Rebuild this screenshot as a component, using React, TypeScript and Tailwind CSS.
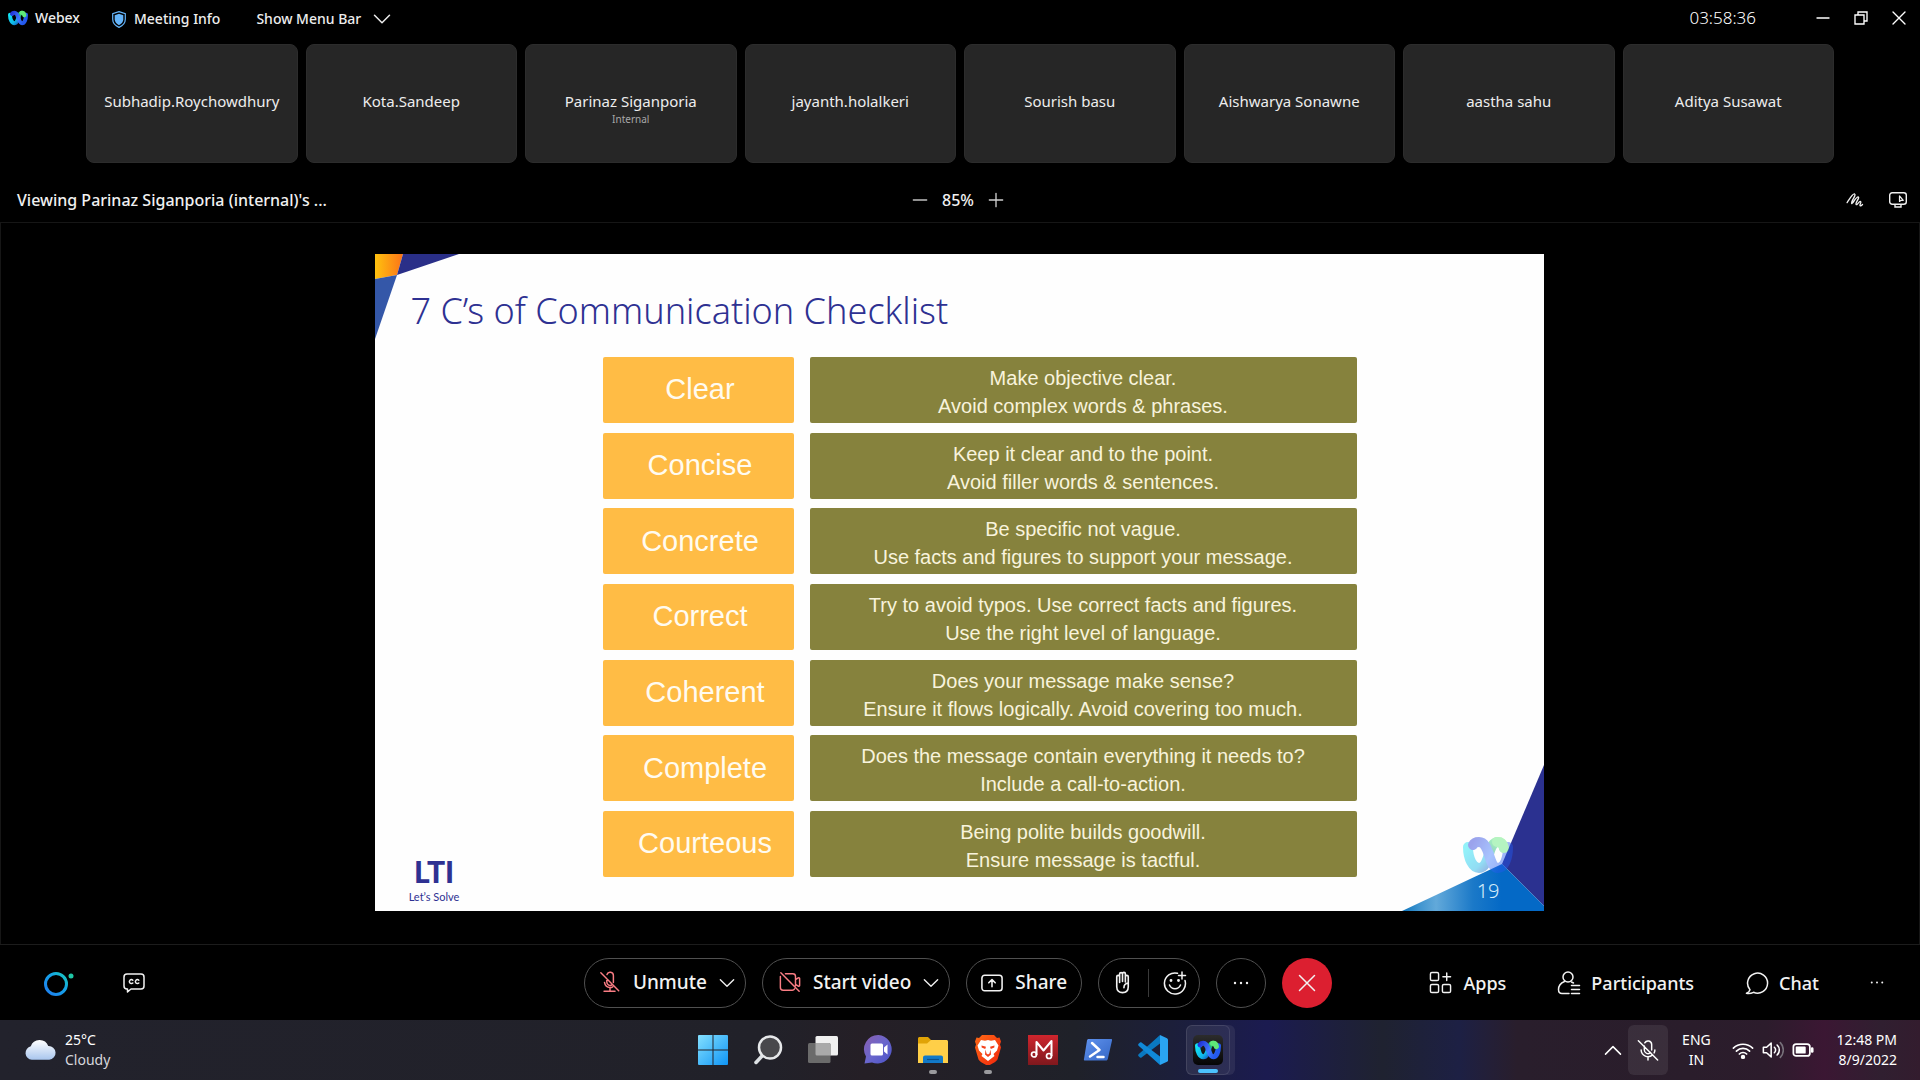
import type { ReactNode } from "react";

const participants = [
  { name: "Subhadip.Roychowdhury" },
  { name: "Kota.Sandeep" },
  { name: "Parinaz Siganporia", note: "Internal" },
  { name: "jayanth.holalkeri" },
  { name: "Sourish basu" },
  { name: "Aishwarya Sonawne" },
  { name: "aastha sahu" },
  { name: "Aditya Susawat" },
];

const checklist = [
  { label: "Clear", lines: ["Make objective clear.", "Avoid complex words & phrases."] },
  { label: "Concise", lines: ["Keep it clear and to the point.", "Avoid filler words & sentences."] },
  { label: "Concrete", lines: ["Be specific not vague.", "Use facts and figures to support your message."] },
  { label: "Correct", lines: ["Try to avoid typos. Use correct facts and figures.", "Use the right level of language."] },
  { label: "Coherent", shifted: true, lines: ["Does your message make sense?", "Ensure it flows logically. Avoid covering too much."] },
  { label: "Complete", shifted: true, lines: ["Does the message contain everything it needs to?", "Include a call-to-action."] },
  { label: "Courteous", shifted: true, lines: ["Being polite builds goodwill.", "Ensure message is tactful."] },
];

function WebexMark({ id, className }: { id: string; className: string }) {
  return (
    <svg viewBox="0 0 50 36" className={className} fill="none" strokeWidth="10" strokeLinecap="round" aria-hidden="true">
      <defs>
        <linearGradient id={`${id}-c`} x1="0" y1="0" x2="1" y2="1">
          <stop offset="0" stopColor="#12e4f5" />
          <stop offset="0.7" stopColor="#10b5e8" />
          <stop offset="1" stopColor="#1466c8" />
        </linearGradient>
        <linearGradient id={`${id}-b`} x1="0" y1="0" x2="1" y2="0.4">
          <stop offset="0" stopColor="#2437d8" />
          <stop offset="0.6" stopColor="#3f7cff" />
          <stop offset="1" stopColor="#2459ee" />
        </linearGradient>
        <linearGradient id={`${id}-g`} x1="0" y1="1" x2="1" y2="0">
          <stop offset="0" stopColor="#0f8f7a" />
          <stop offset="0.6" stopColor="#2fcf78" />
          <stop offset="1" stopColor="#6ef06a" />
        </linearGradient>
      </defs>
      <path d="M26 17c2-7 4-12 9-12 4 0 5 2 6 6" stroke={`url(#${id}-g)`} />
      <path d="M5 10c0 12 5 21 11 21s8-7 10-14" stroke={`url(#${id}-c)`} />
      <path d="M10 8c1-2 3-3 6-3 6 0 8 7 10 13s4 13 9 13c6 0 10-9 10-21" stroke={`url(#${id}-b)`} />
      <path d="M34 5c4 0 6 2 7 6" stroke="#5fe878" />
    </svg>
  );
}

function Stroke({ children, className = "", size = 24, width = 1.5 }: { children: ReactNode; className?: string; size?: number; width?: number }) {
  return (
    <svg viewBox="0 0 24 24" width={size} height={size} className={`shrink-0 ${className}`} fill="none" stroke="currentColor" strokeWidth={width} strokeLinecap="round" strokeLinejoin="round" aria-hidden="true">
      {children}
    </svg>
  );
}

const Chevron = ({ size = 16, up = false }: { size?: number; up?: boolean }) => (
  <Stroke size={size} width={2}>
    <path d={up ? "M2 17.500 12 7.500l10 10" : "M2 7l10 10L22 7"} />
  </Stroke>
);

function TitleBar() {
  return (
    <header className="flex h-9 items-center pr-3 pl-2 text-sm font-medium text-[#ededed]">
      <WebexMark id="title" className="h-4 w-5" />
      <span className="ml-[7px]">Webex</span>
      <button className="ml-8 flex items-center gap-2 pt-0.5">
        <svg viewBox="0 0 14 17" width="14" height="17" aria-hidden="true">
          <path d="M7 .6 13.300 2.700v5.600c0 3.600-2.600 6.500-6.300 8.100C3.300 14.800.7 11.900.7 8.300V2.700z" fill="none" stroke="#64b4fa" strokeWidth="1.200" />
          <path d="M7 2.800 11.300 4.200v4.100c0 2.600-1.700 4.600-4.300 5.900C4.400 12.900 2.700 10.900 2.700 8.300V4.200z" fill="#64b4fa" />
        </svg>
        Meeting Info
      </button>
      <button className="ml-9 flex items-center gap-3 pt-0.5">
        Show Menu Bar
        <Chevron size={18} />
      </button>
      <time className="ml-auto text-[17px] font-light text-white">03:58:36</time>
      <div className="ml-[58px] flex items-center gap-5 text-white">
        <button aria-label="Minimize"><Stroke size={18} width={1.800}><path d="M4 12h16" /></Stroke></button>
        <button aria-label="Restore">
          <Stroke size={18} width={1.800}><path d="M4 8h12v12H4zM8 8V4h12v12h-4" strokeLinejoin="miter" /></Stroke>
        </button>
        <button aria-label="Close"><Stroke size={18} width={1.800}><path d="m4 4 16 16M20 4 4 20" /></Stroke></button>
      </div>
    </header>
  );
}

function ParticipantStrip() {
  return (
    <ul className="mt-2 grid grid-cols-8 gap-2 px-[86px]">
      {participants.map((p) => (
        <li key={p.name} className="flex h-[119px] flex-col items-center rounded-lg border border-[#2c2c2c] bg-[#262626] pt-[46px] text-[15px] leading-5 text-[#ededed]">
          {p.name}
          {p.note && <span className="text-[10px] leading-4 text-[#a8a8a8]">{p.note}</span>}
        </li>
      ))}
    </ul>
  );
}

function ViewBar() {
  return (
    <div className="grid h-[59px] grid-cols-[1fr_auto_1fr] items-center px-3 pt-3.5 text-base font-medium text-[#f0f0f0]">
      <p className="pl-[5px]">Viewing Parinaz Siganporia (internal)'s ...</p>
      <div className="flex items-center gap-3.5 pr-1">
        <button aria-label="Zoom out" className="text-[#c0c0c0]"><Stroke size={16} width={2}><path d="M2 12h20" /></Stroke></button>
        <span>85%</span>
        <button aria-label="Zoom in" className="text-[#d0d0d0]"><Stroke size={16} width={2}><path d="M2 12h20M12 2v20" /></Stroke></button>
      </div>
      <div className="flex items-center justify-end gap-6">
        <button aria-label="Annotate">
          <Stroke size={18} width={1.800}><path d="M1.500 15.500C5 10.500 9 3 11.500 4c2.500 1.200-4.800 9.500-4 12.500.7 2 6-9.500 9-8.500 2 1-4.500 8-3 10 1.500 1.500 4-5 6-4 1.500.8-1.500 4-.8 5.500.8 1 2.200-.3 3.300-1.500" /></Stroke>
        </button>
        <button aria-label="Remote control">
          <svg viewBox="0 0 20 18" width="20" height="18" fill="none" stroke="currentColor" strokeWidth="1.400" aria-hidden="true">
            <rect x="1.700" y="1.700" width="16.600" height="11.600" rx="2.500" />
            <path d="M7 13.500v2.500h6v-2.500" />
            <path d="M11.500 5v5.500l1.600-1.200h2.200z" strokeLinejoin="round" strokeWidth="1.200" />
          </svg>
        </button>
      </div>
    </div>
  );
}

function Slide() {
  return (
    <article className="relative flex min-h-[657px] w-full max-w-[1169px] flex-col bg-[#fefefe]">
      <svg viewBox="0 0 84 85" width="84" height="85" className="absolute top-0 left-0" aria-hidden="true">
        <defs>
          <linearGradient id="amber"><stop offset="0" stopColor="#ffc20e" /><stop offset="1" stopColor="#fb7318" /></linearGradient>
        </defs>
        <path d="M0 0h28l-6 21L0 25z" fill="url(#amber)" />
        <path d="M28 0h56L22 21z" fill="#2a2f88" />
        <path d="m0 25 22-4L0 85z" fill="#3457a8" />
      </svg>
      <svg viewBox="0 0 142 146" width="142" height="146" className="absolute right-0 bottom-0" aria-hidden="true">
        <defs>
          <linearGradient id="ocean" x1="0" y1="0" x2="1" y2="0">
            <stop offset="0" stopColor="#0c74bc" /><stop offset="0.120" stopColor="#3f94cf" /><stop offset="0.240" stopColor="#62a9da" /><stop offset="0.500" stopColor="#1b79c8" /><stop offset="0.700" stopColor="#0469c6" />
          </linearGradient>
        </defs>
        <path d="M142 0v141l-42-42z" fill="#2b3190" />
        <path d="m0 146 100-47 42 42v5z" fill="url(#ocean)" />
      </svg>
      <WebexMark id="mark" className="absolute right-[31px] bottom-[38px] h-9 w-[50px] opacity-45" />

      <h1 className="h-[103px] pt-8 pl-9 text-4xl leading-[49px] font-light text-[#2e3192]">7 C’s of Communication Checklist</h1>
      <div className="relative flex flex-1 items-end justify-between">
        <div className="w-[228px] pb-1.5 pl-[34px] text-[#2e3192]">
          <div className="w-[51px] text-center">
            <p className="font-[Lato] text-3xl leading-9 font-black">LTI</p>
            <p className="font-[Lato] text-[11px] leading-4 whitespace-nowrap">Let’s Solve</p>
          </div>
        </div>
        <div className="grid h-[520px] flex-1 grid-cols-[191px_1fr] content-between gap-x-4 self-start font-['Liberation_Sans',sans-serif]">
          {checklist.map((row) => (
            <div key={row.label} className="contents">
              <h2 className={`flex h-[66px] items-center justify-center rounded-xs bg-[#ffbc45] text-[29px] text-[#fffbf0] ${row.shifted ? "pl-3.5" : "pl-1"}`}>{row.label}</h2>
              <p className="flex h-[66px] flex-col items-center justify-center rounded-xs bg-[#86823d] pt-1 text-xl leading-7 text-[#f8f3dc]">
                {row.lines.map((line) => (
                  <span key={line}>{line}</span>
                ))}
              </p>
            </div>
          ))}
        </div>
        <p className="w-[187px] pr-11 pb-1.5 text-right text-xl font-light text-[#d5ecfa]">19</p>
      </div>
    </article>
  );
}

const pill = "flex h-[50px] items-center rounded-full border border-[#505050]";

function ControlBar() {
  return (
    <footer className="grid h-[76px] grid-cols-[1fr_auto_1fr] items-center border-t border-[#1c1c1c] text-lg font-medium text-[#f2f2f2]">
      <div className="flex items-center gap-[62px] pl-[42px]">
        <button aria-label="Webex Assistant">
          <svg viewBox="0 0 34 28" width="34" height="28" fill="none" aria-hidden="true">
            <defs>
              <linearGradient id="ring" x1="0" y1="1" x2="1" y2="0"><stop offset="0" stopColor="#1f7cf0" /><stop offset="0.600" stopColor="#14a4e8" /><stop offset="1" stopColor="#19c8b8" /></linearGradient>
            </defs>
            <circle cx="14" cy="15" r="10.500" stroke="url(#ring)" strokeWidth="3" />
            <circle cx="29" cy="7" r="2.500" fill="#1fc7a6" />
          </svg>
        </button>
        <button aria-label="Closed captions">
          <svg viewBox="0 0 24 22" width="24" height="22" fill="none" stroke="currentColor" strokeWidth="1.500" strokeLinecap="round" strokeLinejoin="round" className="-ml-4" aria-hidden="true">
            <path d="M5 2h14a3 3 0 0 1 3 3v9a3 3 0 0 1-3 3H9l-3.500 3V17H5a3 3 0 0 1-3-3V5a3 3 0 0 1 3-3z" />
            <path d="M10.800 8.200a2 2 0 1 0 0 2.800M16.800 8.200a2 2 0 1 0 0 2.800" />
          </svg>
        </button>
      </div>

      <div className="flex items-center gap-4 pr-1 text-[19px]">
        <div className={`${pill} pr-2.5 pl-3.5`}>
          <button className="flex items-center gap-3">
            <Stroke size={22} width={1.600} className="text-[#fa7d84]"><path d="M8.500 8.500V12a3.700 3.700 0 0 0 6 2.900M15.700 12.500V5a3.600 3.600 0 0 0-7-1.200M6 12.500c.6 3.500 3 5.500 6 5.500 1.200 0 2.200-.3 3-.8M12 18v4M5.500 22h12M2 2l19.500 19.500" /></Stroke>
            Unmute
          </button>
          <button aria-label="Audio options" className="ml-3"><Chevron /></button>
        </div>
        <div className={`${pill} pr-2.5 pl-4`}>
          <button className="flex items-center gap-3">
            <Stroke size={22} width={1.600} className="text-[#fa7d84]"><path d="M1.500 6v12a3 3 0 0 0 3 3h10a3 3 0 0 0 2.500-1.500M7 3h8a3 3 0 0 1 3 3v10M18 9.500 21 7.500c.7-.4 1.500 0 1.500.8v7.400c0 .8-.8 1.200-1.500.8l-3-2M2 2l20 20" /></Stroke>
            Start video
          </button>
          <button aria-label="Video options" className="ml-3"><Chevron /></button>
        </div>
        <button className={`${pill} gap-3 px-3.5`}>
          <Stroke size={22} width={1.700}><rect x="1" y="3.500" width="22" height="17" rx="3" /><path d="M12 16V8.500M8.500 11.800 12 8.300l3.500 3.500" /></Stroke>
          Share
        </button>
        <div className={`${pill} px-3`}>
          <button aria-label="Raise hand">
            <Stroke size={23} width={1.700}><path d="M6 12.500V6a1.500 1.500 0 0 1 3 0v6M9 11V3.200a1.500 1.500 0 0 1 3 0V11M12 11V3a1.500 1.500 0 0 1 3 0v8.500M15 6a1.500 1.500 0 0 1 3 0v10.500c0 4-2.500 6-6 6s-6-2-6-6V12M18 12.500c-3 .3-4.500 2-4.500 5" /></Stroke>
          </button>
          <span className="mx-3.5 h-7 w-px bg-[#3a3a3a]" />
          <button aria-label="Reactions">
            <Stroke><path d="M14.500 2.300A10.500 10.500 0 1 0 22 9.500M19 1v7M15.500 4.500h7M6.500 14c1 2.400 3 3.700 5.500 3.700s4.500-1.300 5.500-3.700" /><circle cx="8" cy="9.500" r=".7" fill="currentColor" /><circle cx="15.500" cy="9.500" r=".7" fill="currentColor" /></Stroke>
          </button>
        </div>
        <button aria-label="More options" className={`${pill} w-[50px] justify-center`}>
          <Stroke><g fill="currentColor" stroke="none"><circle cx="6" cy="12" r="1.200" /><circle cx="12" cy="12" r="1.200" /><circle cx="18" cy="12" r="1.200" /></g></Stroke>
        </button>
        <button aria-label="Leave meeting" className="flex size-[50px] items-center justify-center rounded-full bg-[#dc1f30]">
          <Stroke size={20} width={1.800}><path d="m3 3 18 18M21 3 3 21" /></Stroke>
        </button>
      </div>

      <div className="flex items-center justify-end gap-[51px] pr-9">
        <button className="flex items-center gap-3">
          <Stroke size={23}><rect x="1.500" y="1.500" width="8.500" height="8.500" rx="1.500" /><rect x="1.500" y="14" width="8.500" height="8.500" rx="1.500" /><rect x="14" y="14" width="8.500" height="8.500" rx="1.500" /><path d="M18.500 2v8M14.500 6h8" /></Stroke>
          Apps
        </button>
        <button className="flex items-center gap-2.5">
          <Stroke><circle cx="11" cy="6" r="5" /><path d="M7.500 10.500C4 12 1.500 15 1.500 18.500c0 2.500 1 4 3.500 4h7M14.500 11l2 1M14.500 14.500h8M14.500 18.500h8M14.500 22.500h8" /></Stroke>
          Participants
        </button>
        <button className="flex items-center gap-2.5">
          <Stroke><path d="M5 18.700A10 10 0 1 1 8.500 21.300c-2 1-4 1.500-7 1 1.800-.7 3-2 3.500-3.600z" /></Stroke>
          Chat
        </button>
        <button aria-label="More panels">
          <Stroke size={14}><g fill="currentColor" stroke="none"><circle cx="3" cy="11" r="1.700" /><circle cx="12" cy="11" r="1.700" /><circle cx="21" cy="11" r="1.700" /></g></Stroke>
        </button>
      </div>
    </footer>
  );
}

const taskApps: { name: string; state?: "open" | "active"; art: ReactNode }[] = [
  {
    name: "Start",
    art: (
      <>
        <linearGradient id="win" x1="0" y1="0" x2="1" y2="1"><stop offset="0" stopColor="#84e0ff" /><stop offset="1" stopColor="#0f95f5" /></linearGradient>
        <path d="M0 1a1 1 0 0 1 1-1h13.500v14.500H0zM15.500 0H29a1 1 0 0 1 1 1v13.500H15.500zM0 15.500h14.500V30H1a1 1 0 0 1-1-1zM15.500 15.500H30V29a1 1 0 0 1-1 1H15.500z" fill="url(#win)" />
      </>
    ),
  },
  {
    name: "Search",
    art: (
      <>
        <path d="M9.500 20.500 3 27.500" stroke="#dde1e4" strokeWidth="3.500" strokeLinecap="round" />
        <circle cx="17" cy="12.500" r="11" fill="#48484c" stroke="#e6e8ea" strokeWidth="2.500" />
      </>
    ),
  },
  {
    name: "Task view",
    art: (
      <>
        <rect x="7.500" y="1" width="22.500" height="19.500" rx="1.500" fill="#f0f0f0" />
        <rect x="0" y="8" width="22.500" height="20" rx="1.500" fill="#6b6b6b" />
        <path d="M7.500 8h13.500a1.500 1.500 0 0 1 1.500 1.500v11H9a1.500 1.500 0 0 1-1.500-1.500z" fill="#aaa" />
      </>
    ),
  },
  {
    name: "Teams chat",
    art: (
      <>
        <linearGradient id="teams" x1="0" y1="0" x2="1" y2="1"><stop offset="0" stopColor="#8a5fb0" /><stop offset="0.500" stopColor="#6a66cc" /><stop offset="1" stopColor="#4a52c8" /></linearGradient>
        <path d="M15.500 0A14.300 14.300 0 1 1 9 27.500L1.500 28.500 3 21.500A14.300 14.300 0 0 1 15.500 0z" fill="url(#teams)" />
        <rect x="7.500" y="8.500" width="12.500" height="12" rx="1.500" fill="#fff" />
        <path d="m21 12.500 3.500-3v10l-3.500-3z" fill="#fff" />
      </>
    ),
  },
  {
    name: "File Explorer",
    state: "open",
    art: (
      <>
        <path d="M0 3.500C0 2.600.7 2 1.500 2H10l3 3h10v6H0z" fill="#e0a306" />
        <path d="M0 8.500h9L13 5h15.500c.8 0 1.500.7 1.500 1.500V28H0z" fill="#ffcf48" />
        <path d="M5 28v-5.500c0-1.200 1-2 2-2h16c1.200 0 2 .8 2 2V28z" fill="#1279c8" />
        <path d="M9 24.500h12" stroke="#0b4f8c" strokeWidth="1.200" />
      </>
    ),
  },
  {
    name: "Brave",
    state: "open",
    art: (
      <>
        <linearGradient id="brave" x1="0" y1="0" x2="1" y2="1"><stop offset="0" stopColor="#ff6a16" /><stop offset="1" stopColor="#f0240c" /></linearGradient>
        <path d="M9 0h12l3 3 2.500-.5 1.500 4-1 3 1 3-3.500 12c-1 2-5 4-9.500 6.500C10.500 28.500 6.500 26.500 5.500 24.500L2 12.500l1-3-1-3 1.500-4L6 3z" fill="url(#brave)" />
        <path d="m8 5 4 .8L15 5l3 .8L22 5l3.500 5.500-1.500 5-3.500 3.500 1 2-6.500 5-6.500-5 1-2L6 15.500l-1.500-5z" fill="#fff" />
        <path d="m8.500 10.500 4.500 1.300-.8 2.200-3.500-1.500zM21.500 10.500 17 11.800l.8 2.200 3.500-1.500zM12.500 14.500l1 4L15 19.500l1.500-1 1-4 .5 5L15 22l-3-2.500z" fill="#f4401a" />
      </>
    ),
  },
  {
    name: "Music",
    art: (
      <>
        <linearGradient id="music" x1="0" y1="0" x2="0" y2="1"><stop offset="0" stopColor="#cf252d" /><stop offset="1" stopColor="#7f181d" /></linearGradient>
        <rect width="30" height="30" fill="url(#music)" />
        <path d="M8.500 20V7l7 8.500L23.500 6v15" fill="none" stroke="#fff" strokeWidth="2" strokeLinejoin="round" />
        <circle cx="6" cy="19.500" r="2.500" fill="none" stroke="#fff" strokeWidth="1.700" />
        <circle cx="21" cy="21" r="2.500" fill="none" stroke="#fff" strokeWidth="1.700" />
      </>
    ),
  },
  {
    name: "PowerShell",
    art: (
      <>
        <linearGradient id="shell" x1="0" y1="0" x2="1" y2="1"><stop offset="0" stopColor="#5f92ee" /><stop offset="1" stopColor="#3466c4" /></linearGradient>
        <path d="M5.500 4H28c1 0 1.300.6 1 1.500L24.800 24c-.2.800-.8 1.500-1.800 1.500H2c-1 0-1.300-.7-1-1.500L4 5.500C4.200 4.600 4.700 4 5.500 4z" fill="url(#shell)" />
        <path d="m9 8 7.500 7L7 21.500M14.500 22h6" fill="none" stroke="#fff" strokeWidth="2.500" strokeLinecap="round" strokeLinejoin="round" />
      </>
    ),
  },
  {
    name: "Visual Studio Code",
    art: (
      <>
        <path d="m22 0 7 3.200c.6.300 1 1 1 1.600v20.400c0 .700-.4 1.300-1 1.600L22 30z" fill="#2aa5f2" />
        <path d="M22 0v8.500L3.500 22.500c-.5.400-1 .4-1.500 0L.6 21.200c-.6-.600-.6-1.300 0-1.900z" fill="#0a78c0" />
        <path d="M22 30v-8.500L3.500 7.500c-.5-.4-1-.4-1.500 0L.6 8.800c-.6.600-.6 1.300 0 1.900z" fill="#1089d8" />
      </>
    ),
  },
  {
    name: "Webex",
    state: "active",
    art: (
      <>
        <linearGradient id="wx" x1="0" y1="0" x2="0" y2="1"><stop offset="0" stopColor="#2c2c2c" /><stop offset="1" stopColor="#050505" /></linearGradient>
        <rect width="30" height="30" rx="5" fill="url(#wx)" />
      </>
    ),
  },
];

function Taskbar() {
  return (
    <nav aria-label="Taskbar" className="grid h-[60px] grid-cols-[1fr_auto_1fr] items-center bg-[linear-gradient(90deg,#22222c_0%,#212129_40%,#251f26_45%,#1f2129_56%,#1c1f3a_61%,#1b1b50_66%,#1f2230_72%,#1d2044_76%,#291e2c_79%,#2a1d2b_88%,#2c1c2c_92%,#3b1733_95%,#301f30_98%,#331c2e_100%)] text-sm leading-5 text-white">
      <button className="flex items-center gap-2 pl-6 text-left">
        <svg viewBox="0 0 34 24" width="33" height="24" aria-hidden="true">
          <linearGradient id="cloud" x1="0" y1="0" x2="0" y2="1"><stop offset="0" stopColor="#ffffff" /><stop offset="1" stopColor="#a9c6ee" /></linearGradient>
          <path d="M8 22a7 7 0 0 1-1-13.800A9.500 9.500 0 0 1 25 8a7 7 0 0 1 1 14z" fill="url(#cloud)" />
        </svg>
        <span>25°C<span className="block text-[#d6d6dc]">Cloudy</span></span>
      </button>

      <ul className="flex gap-[11px]">
        {taskApps.map((app) => (
          <li key={app.name}>
            <button aria-label={app.name} className={`relative flex h-[50px] w-11 items-center justify-center rounded-md ${app.state === "active" ? "border border-white/10 bg-white/8 shadow-[5px_0_0_0_rgba(255,255,255,0.07)]" : ""}`}>
              <svg viewBox="0 0 30 30" width="30" height="30" fill="none" aria-hidden="true">{app.art}</svg>
              {app.state === "active" && <WebexMark id="task" className="absolute h-5 w-[26px]" />}
              {app.state && <span className={`absolute bottom-px h-1 rounded-full ${app.state === "active" ? "w-5 bg-[#4cc2ff]" : "w-2 bg-[#9a9a9e]"}`} />}
            </button>
          </li>
        ))}
      </ul>

      <div className="flex items-center justify-end pr-[23px]">
        <button aria-label="Show hidden icons" className="mr-1.5"><Chevron up size={18} /></button>
        <button aria-label="Microphone muted" className="flex h-[50px] w-10 items-center justify-center rounded-md bg-white/8">
          <Stroke size={22} width={1.600}><path d="M8 7.500V12a4 4 0 0 0 6.800 2.800M16 12V6a4 4 0 0 0-7.500-1.800M4.500 12a7.500 7.500 0 0 0 12.500 5.300M19.500 12a7 7 0 0 1-.8 3.200M12 19.500V23M1.500 2 22.500 23" /></Stroke>
        </button>
        <button className="w-14 text-center">ENG<br />IN</button>
        <button aria-label="Network, volume and battery" className="mr-[22px] ml-2 flex items-center gap-2">
          <Stroke size={22} width={1.800}><path d="M1.500 10a15 15 0 0 1 21 0M4.800 13.200a10.300 10.300 0 0 1 14.400 0M8 16.400a5.700 5.700 0 0 1 8 0" /><circle cx="12" cy="19.500" r="1.500" fill="currentColor" /></Stroke>
          <Stroke size={22} width={1.700}><path d="M1.500 9v6H5l5 4.500v-15L5 9zM13.500 9a4 4 0 0 1 0 6M16.500 6.500a7.500 7.500 0 0 1 0 11" /><path d="M20 4a11.500 11.500 0 0 1 0 16" stroke="#77707a" /></Stroke>
          <Stroke size={22} width={1.900}><rect x="1.500" y="5.500" width="18" height="13" rx="3" /><rect x="5" y="9" width="9" height="6" fill="currentColor" /><path d="M22 10.500v3" strokeWidth="3" /></Stroke>
        </button>
        <time className="text-right">12:48 PM<br />8/9/2022</time>
      </div>
    </nav>
  );
}

export default function App() {
  return (
    <div className="flex min-h-screen flex-col bg-black font-['Noto_Sans',sans-serif]">
      <TitleBar />
      <ParticipantStrip />
      <ViewBar />
      <main className="flex flex-1 items-center justify-center border border-b-0 border-[#161616] pr-0.5 pb-0.5">
        <Slide />
      </main>
      <ControlBar />
      <Taskbar />
    </div>
  );
}
